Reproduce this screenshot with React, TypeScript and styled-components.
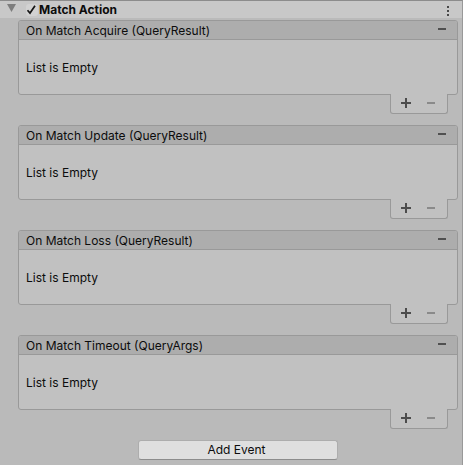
import React from "react";
import styled, { createGlobalStyle } from "styled-components";

const GlobalStyle = createGlobalStyle`
  * { box-sizing: border-box; }
  body {
    margin: 0;
    background: #bababa;
    color: #0c0c0c;
    font: 12px/16px Inter, "Liberation Sans", sans-serif;
  }
  button { font: inherit; color: inherit; }
`;

const Inspector = styled.main`
  min-height: 100vh;
  border-top: 1px solid #8c8c8c;
  border-right: 1px solid #999;
`;

const TitleBar = styled.header`
  display: flex;
  align-items: center;
  height: 17px;
  padding: 0 9px 0 6px;
  background: #c8c8c8;
`;

const IconButton = styled.button`
  display: flex;
  align-items: center;
  justify-content: center;
  flex: none;
  padding: 0;
  border: 0;
  background: none;
`;

const EnabledLabel = styled.label`
  display: flex;
  align-items: center;
  flex: 1;
  padding-left: 9px;
  gap: 1px;
`;

const CheckWrap = styled.span`
  display: grid;
  width: 12px;
  height: 12px;

  & > * { grid-area: 1 / 1; }
  svg { pointer-events: none; visibility: hidden; }
  input:checked + svg { visibility: visible; }
`;

const CheckInput = styled.input`
  appearance: none;
  width: 12px;
  height: 12px;
  margin: 0;
  border-radius: 3px;
  background: #d2d2d2;
`;

const Title = styled.h1`
  margin: 0;
  font-size: 12px;
  line-height: 16px;
  font-weight: 700;
`;

const EventList = styled.div`
  display: flex;
  flex-direction: column;
  gap: 11px;
  padding: 2px 4px 0 18px;
`;

const EventSection = styled.section`
  display: flex;
  flex-direction: column;
`;

const Panel = styled.div`
  border: 1px solid #999;
  border-radius: 3px;
  background: #c1c1c1;
`;

const PanelHeader = styled.div`
  display: flex;
  align-items: flex-end;
  justify-content: space-between;
  height: 19px;
  padding: 0 11px 0 7px;
  border-bottom: 1px solid #999;
  border-radius: 2px 2px 0 0;
  background: #adadad;
`;

const RemoveButton = styled(IconButton)`
  height: 18px;
`;

const EventName = styled.h2`
  margin: 0;
  font-size: 12px;
  line-height: 16px;
  font-weight: 400;
  padding-top: 2px;
`;

const EmptyMessage = styled.p`
  margin: 0;
  padding: 20px 7px 18px;
`;

const Footer = styled.div`
  display: flex;
  align-self: flex-end;
  align-items: center;
  gap: 15px;
  height: 20px;
  margin: -1px 10px 0 0;
  padding: 0 12px 1px 9px;
  border: solid #999;
  border-width: 0 1px 1px;
  border-radius: 0 0 3px 3px;
  background: #c1c1c1;
`;

const AddEventRow = styled.div`
  display: flex;
  justify-content: center;
  padding: 11px 0 5px 14px;
`;

const AddEventButton = styled.button`
  width: 200px;
  height: 20px;
  padding: 0 3px 0 0;
  border: 1px solid #adadad;
  border-bottom-color: #8c8c8c;
  border-radius: 3px;
  background: #dfdfdf;
  line-height: 18px;
`;

const Minus = ({ color = "#505050", height = 2 }: { color?: string; height?: number }) => (
  <svg width="8" height={height} aria-hidden="true">
    <rect width="8" height="2" fill={color} />
  </svg>
);

const Plus = () => (
  <svg width="12" height="12" aria-hidden="true">
    <path d="M1 5h10v2H1zM5 1h2v10H5z" fill="#4c4c4c" />
  </svg>
);

const events = [
  "On Match Acquire (QueryResult)",
  "On Match Update (QueryResult)",
  "On Match Loss (QueryResult)",
  "On Match Timeout (QueryArgs)",
];

export default function App() {
  return (
    <>
      <GlobalStyle />
      <Inspector>
        <TitleBar>
          <IconButton aria-label="Collapse Match Action">
            <svg width="11" height="12" aria-hidden="true">
              <path d="M1 0h9L5.500 8z" fill="#7d7d7d" />
            </svg>
          </IconButton>
          <EnabledLabel>
            <CheckWrap>
              <CheckInput type="checkbox" defaultChecked />
              <svg width="12" height="12" aria-hidden="true">
                <path d="M1.500 6.200L4 9L9 1.700" fill="none" stroke="#151515" strokeWidth="1.700" />
              </svg>
            </CheckWrap>
            <Title>Match Action</Title>
          </EnabledLabel>
          <IconButton aria-label="More options">
            <svg width="10" height="12" aria-hidden="true">
              <path d="M4 2h2v2H4zM4 6h2v2H4zM4 10h2v2H4z" fill="#484848" />
            </svg>
          </IconButton>
        </TitleBar>
        <EventList>
          {events.map((name) => (
            <EventSection key={name}>
              <Panel>
                <PanelHeader>
                  <EventName>{name}</EventName>
                  <RemoveButton aria-label={`Remove ${name}`}>
                    <Minus height={4} />
                  </RemoveButton>
                </PanelHeader>
                <EmptyMessage>List is Empty</EmptyMessage>
              </Panel>
              <Footer>
                <IconButton aria-label={`Add listener to ${name}`}>
                  <Plus />
                </IconButton>
                <IconButton aria-label={`Remove listener from ${name}`} disabled>
                  <Minus color="#8a8a8a" />
                </IconButton>
              </Footer>
            </EventSection>
          ))}
        </EventList>
        <AddEventRow>
          <AddEventButton>Add Event</AddEventButton>
        </AddEventRow>
      </Inspector>
    </>
  );
}
